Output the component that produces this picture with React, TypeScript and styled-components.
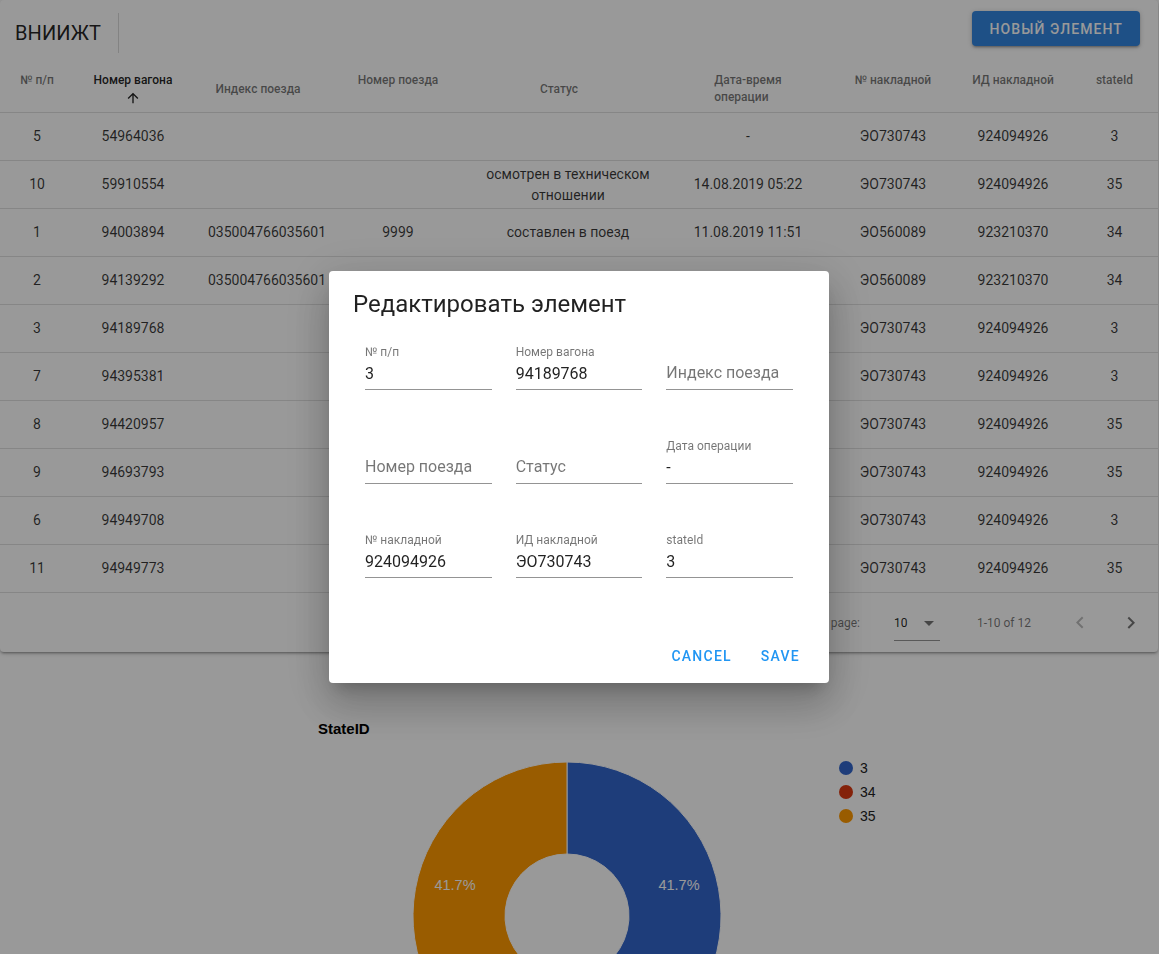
import React from "react";
import styled, { createGlobalStyle } from "styled-components";

const Global = createGlobalStyle`
  html, body {
    margin: 0;
    padding: 0;
    overflow: hidden;
    background: #fff;
    font-family: Roboto, "Liberation Sans", Arial, sans-serif;
  }
  * { box-sizing: border-box; }
`;

const Page = styled.div`
  width: 1159px;
  height: 954px;
  overflow: hidden;
  background: #fff;
`;

const Paper = styled.div`
  width: 1158px;
  background: #fff;
  border-radius: 4px;
  box-shadow: 0px 1px 5px 0px rgba(0,0,0,0.2), 0px 2px 2px 0px rgba(0,0,0,0.14), 0px 3px 1px -2px rgba(0,0,0,0.12);
`;

const Toolbar = styled.div`
  display: flex;
  align-items: center;
  height: 66px;
  padding: 0 18px 0 15px;
`;

const Brand = styled.div`
  font-size: 20px;
  font-weight: 400;
  color: rgba(0,0,0,0.87);
  letter-spacing: 0.1px;
`;

const VDivider = styled.div`
  width: 1px;
  height: 40px;
  margin-left: 17px;
  background: rgba(0,0,0,0.14);
`;

const Spacer = styled.div`
  flex: 1;
`;

const PrimaryButton = styled.button`
  align-self: flex-start;
  margin-top: 11px;
  height: 35px;
  padding: 0 17px;
  border: none;
  border-radius: 4px;
  background: #3385e0;
  color: #fff;
  font-family: Roboto, sans-serif;
  font-size: 14px;
  font-weight: 500;
  letter-spacing: 1.1px;
  text-transform: uppercase;
  box-shadow: 0px 1px 5px 0px rgba(0,0,0,0.2), 0px 2px 2px 0px rgba(0,0,0,0.14), 0px 3px 1px -2px rgba(0,0,0,0.12);
`;

const COLS = "74px 118px 150px 112px 228px 132px 158px 82px 1fr";

const HeadRow = styled.div`
  display: grid;
  grid-template-columns: ${COLS};
  height: 47px;
  border-bottom: 1px solid rgba(224,224,224,1);
`;

const BodyRow = styled.div`
  display: grid;
  grid-template-columns: ${COLS};
  height: 48px;
  border-bottom: 1px solid rgba(224,224,224,1);
`;

const HeadCell = styled.div<{ $pl?: number }>`
  display: flex;
  align-items: center;
  justify-content: center;
  padding-left: ${(p) => p.$pl || 0}px;
  font-size: 12px;
  font-weight: 500;
  line-height: 17px;
  color: rgba(0,0,0,0.54);
`;

const SortLabel = styled.span<{ $stacked?: boolean; $active?: boolean }>`
  display: inline-flex;
  flex-direction: ${(p) => (p.$stacked ? "column" : "row")};
  align-items: center;
  color: ${(p) => (p.$active ? "rgba(0,0,0,0.87)" : "rgba(0,0,0,0.54)")};
`;

const TwoLine = styled.span`
  text-align: left;
  white-space: nowrap;
`;

const ArrowBox = styled.span<{ $hidden?: boolean; $stacked?: boolean }>`
  display: inline-flex;
  width: 16px;
  height: ${(p) => (p.$stacked ? 18 : 16)}px;
  margin-left: ${(p) => (p.$stacked ? 0 : 2)}px;
  align-items: center;
  justify-content: center;
  opacity: ${(p) => (p.$hidden ? 0 : 1)};
  svg { width: 16px; height: 16px; fill: rgba(0,0,0,0.87); }
`;

const Cell = styled.div<{ $pl?: number }>`
  display: flex;
  align-items: center;
  justify-content: center;
  text-align: center;
  padding-left: ${(p) => p.$pl || 0}px;
  font-size: 14px;
  line-height: 21px;
  color: rgba(0,0,0,0.78);
`;

const Wrap = styled.span`
  max-width: 172px;
`;

const Pagination = styled.div`
  display: flex;
  align-items: center;
  justify-content: flex-end;
  height: 59px;
  padding-right: 3px;
  padding-top: 1px;
  font-size: 12px;
  color: rgba(0,0,0,0.54);
`;

const Caption = styled.span<{ $ml?: number }>`
  margin-left: ${(p) => p.$ml || 0}px;
  font-size: 12px;
  color: rgba(0,0,0,0.54);
`;

const SelectBox = styled.div`
  position: relative;
  display: flex;
  align-items: center;
  justify-content: space-between;
  width: 46px;
  height: 20px;
  margin-left: 34px;
  font-size: 12px;
  color: rgba(0,0,0,0.87);
  svg { width: 24px; height: 24px; fill: rgba(0,0,0,0.54); margin-right: -1px; }
  &::after {
    content: "";
    position: absolute;
    left: 0;
    right: 0;
    bottom: -8px;
    height: 1px;
    background: rgba(0,0,0,0.42);
  }
`;

const PagerActions = styled.div`
  display: flex;
  gap: 3px;
  margin-left: 25px;
`;

const IconBtn = styled.span<{ $disabled?: boolean }>`
  display: flex;
  width: 48px;
  height: 48px;
  align-items: center;
  justify-content: center;
  svg { width: 24px; height: 24px; fill: ${(p) => (p.$disabled ? "rgba(0,0,0,0.26)" : "rgba(0,0,0,0.54)")}; }
`;

const ChartSection = styled.div`
  height: 302px;
  overflow: hidden;
`;

const Backdrop = styled.div`
  position: fixed;
  inset: 0;
  padding-right: 1px;
  background: rgba(0,0,0,0.4);
  display: flex;
  align-items: center;
  justify-content: center;
`;

const Dialog = styled.div`
  width: 500px;
  background: #fff;
  border-radius: 4px;
  box-shadow: 0px 11px 15px -7px rgba(0,0,0,0.2), 0px 24px 38px 3px rgba(0,0,0,0.14), 0px 9px 46px 8px rgba(0,0,0,0.12);
  display: flex;
  flex-direction: column;
`;

const DialogTitle = styled.h2`
  margin: 0;
  padding: 19px 24px 0 24px;
  font-size: 24px;
  line-height: 28px;
  font-weight: 400;
  color: rgba(0,0,0,0.87);
`;

const FieldGrid = styled.div`
  display: grid;
  grid-template-columns: repeat(3, 1fr);
  column-gap: 24px;
  row-gap: 46px;
  padding: 24px 36px 0 36px;
`;

const Field = styled.div`
  height: 48px;
  border-bottom: 1px solid rgba(0,0,0,0.42);
  display: flex;
  flex-direction: column;
`;

const FieldLabel = styled.div`
  height: 16px;
  padding-top: 3px;
  font-size: 12px;
  line-height: 14px;
  color: rgba(0,0,0,0.54);
  white-space: nowrap;
`;

const FieldInput = styled.div<{ $placeholder?: boolean }>`
  padding: 6px 0 7px;
  font-size: 16px;
  line-height: 19px;
  color: ${(p) => (p.$placeholder ? "rgba(0,0,0,0.54)" : "rgba(0,0,0,0.87)")};
  white-space: nowrap;
`;

const DialogActions = styled.div`
  display: flex;
  justify-content: flex-end;
  gap: 13px;
  padding: 60px 21px 9px;
`;

const TextButton = styled.button`
  height: 36px;
  padding: 0 8px;
  border: none;
  background: transparent;
  color: #2196f3;
  font-family: Roboto, sans-serif;
  font-size: 14px;
  font-weight: 500;
  letter-spacing: 1.25px;
  text-transform: uppercase;
`;

type Col = { pl?: number };
const colPad: Col[] = [{}, {}, {}, {}, {}, {}, {}, {}, { pl: 17 }];

const ArrowUp = () => (
  <svg viewBox="0 0 24 24"><path d="M4 12l1.41 1.41L11 7.83V20h2V7.83l5.58 5.59L20 12l-8-8-8 8z" /></svg>
);

type Head = { label: React.ReactNode; stacked?: boolean; active?: boolean; arrow?: boolean };
const heads: Head[] = [
  { label: "№ п/п", stacked: true, arrow: true },
  { label: "Номер вагона", stacked: true, active: true, arrow: true },
  { label: "Индекс поезда", arrow: true },
  { label: "Номер поезда", stacked: true, arrow: true },
  { label: "Статус", arrow: true },
  { label: <TwoLine>Дата-время<br />операции</TwoLine> },
  { label: "№ накладной", stacked: true, arrow: true },
  { label: "ИД накладной", stacked: true, arrow: true },
  { label: "stateId", stacked: true, arrow: true },
];

const rows: string[][] = [
  ["5", "54964036", "", "", "", "-", "ЭО730743", "924094926", "3"],
  ["10", "59910554", "", "", "осмотрен в техническом отношении", "14.08.2019 05:22", "ЭО730743", "924094926", "35"],
  ["1", "94003894", "035004766035601", "9999", "составлен в поезд", "11.08.2019 11:51", "ЭО560089", "923210370", "34"],
  ["2", "94139292", "035004766035601", "", "", "", "ЭО560089", "923210370", "34"],
  ["3", "94189768", "", "", "", "", "ЭО730743", "924094926", "3"],
  ["7", "94395381", "", "", "", "", "ЭО730743", "924094926", "3"],
  ["8", "94420957", "", "", "", "", "ЭО730743", "924094926", "35"],
  ["9", "94693793", "", "", "", "", "ЭО730743", "924094926", "35"],
  ["6", "94949708", "", "", "", "", "ЭО730743", "924094926", "3"],
  ["11", "94949773", "", "", "", "", "ЭО730743", "924094926", "35"],
];

type F = { label: string; value?: string };
const fields: F[] = [
  { label: "№ п/п", value: "3" },
  { label: "Номер вагона", value: "94189768" },
  { label: "Индекс поезда" },
  { label: "Номер поезда" },
  { label: "Статус" },
  { label: "Дата операции", value: "-" },
  { label: "№ накладной", value: "924094926" },
  { label: "ИД накладной", value: "ЭО730743" },
  { label: "stateId", value: "3" },
];

const CX = 567;
const CY = 264;
const RO = 154;
const RI = 62;
const pt = (r: number, a: number) => {
  const rad = (a * Math.PI) / 180;
  return `${(CX + r * Math.sin(rad)).toFixed(2)} ${(CY - r * Math.cos(rad)).toFixed(2)}`;
};
const slice = (a0: number, a1: number) => {
  const large = a1 - a0 > 180 ? 1 : 0;
  return `M ${pt(RO, a0)} A ${RO} ${RO} 0 ${large} 1 ${pt(RO, a1)} L ${pt(RI, a1)} A ${RI} ${RI} 0 ${large} 0 ${pt(RI, a0)} Z`;
};

const Chart = () => (
  <svg width="1159" height="302" viewBox="0 0 1159 302">
    <text x="318" y="82" fontFamily="'Liberation Sans', Arial, sans-serif" fontWeight="bold" fontSize="15" fill="#000">StateID</text>
    <path d={slice(0, 150.12)} fill="#3366cc" stroke="#fff" strokeWidth="1" />
    <path d={slice(150.12, 209.88)} fill="#dc3912" stroke="#fff" strokeWidth="1" />
    <path d={slice(209.88, 360)} fill="#ff9900" stroke="#fff" strokeWidth="1" />
    <text x="679" y="238" textAnchor="middle" fontFamily="'Liberation Sans', Arial, sans-serif" fontSize="14.5" fill="#fff">41.7%</text>
    <text x="455" y="238" textAnchor="middle" fontFamily="'Liberation Sans', Arial, sans-serif" fontSize="14.5" fill="#fff">41.7%</text>
    {[
      { c: "#3366cc", t: "3" },
      { c: "#dc3912", t: "34" },
      { c: "#ff9900", t: "35" },
    ].map((l, i) => (
      <g key={l.t}>
        <circle cx="846" cy={116 + i * 24} r="7" fill={l.c} />
        <text x="860" y={121 + i * 24} fontFamily="'Liberation Sans', Arial, sans-serif" fontSize="14" fill="#222">{l.t}</text>
      </g>
    ))}
  </svg>
);

export default function App() {
  return (
    <>
      <Global />
      <Page>
        <Paper>
          <Toolbar>
            <Brand>ВНИИЖТ</Brand>
            <VDivider />
            <Spacer />
            <PrimaryButton>Новый элемент</PrimaryButton>
          </Toolbar>
          <HeadRow>
            {heads.map((h, i) => (
              <HeadCell key={i} $pl={colPad[i].pl}>
                <SortLabel $stacked={h.stacked} $active={h.active}>
                  <span>{h.label}</span>
                  {h.arrow && (
                    <ArrowBox $hidden={!h.active} $stacked={h.stacked}>
                      <ArrowUp />
                    </ArrowBox>
                  )}
                </SortLabel>
              </HeadCell>
            ))}
          </HeadRow>
          {rows.map((r, ri) => (
            <BodyRow key={ri}>
              {r.map((v, ci) => (
                <Cell key={ci} $pl={colPad[ci].pl}>
                  {ci === 4 ? <Wrap>{v}</Wrap> : v}
                </Cell>
              ))}
            </BodyRow>
          ))}
          <Pagination>
            <Caption>Rows per page:</Caption>
            <SelectBox>
              <span>10</span>
              <svg viewBox="0 0 24 24"><path d="M7 10l5 5 5-5z" /></svg>
            </SelectBox>
            <Caption $ml={37}>1-10 of 12</Caption>
            <PagerActions>
              <IconBtn $disabled>
                <svg viewBox="0 0 24 24"><path d="M15.41 16.09l-4.58-4.59 4.58-4.59L14 5.5l-6 6 6 6z" /></svg>
              </IconBtn>
              <IconBtn>
                <svg viewBox="0 0 24 24"><path d="M8.59 16.34l4.58-4.59-4.58-4.59L10 5.75l6 6-6 6z" /></svg>
              </IconBtn>
            </PagerActions>
          </Pagination>
        </Paper>
        <ChartSection>
          <Chart />
        </ChartSection>
      </Page>
      <Backdrop>
        <Dialog>
          <DialogTitle>Редактировать элемент</DialogTitle>
          <FieldGrid>
            {fields.map((f) => (
              <Field key={f.label}>
                <FieldLabel>{f.value ? f.label : ""}</FieldLabel>
                <FieldInput $placeholder={!f.value}>{f.value || f.label}</FieldInput>
              </Field>
            ))}
          </FieldGrid>
          <DialogActions>
            <TextButton>Cancel</TextButton>
            <TextButton>Save</TextButton>
          </DialogActions>
        </Dialog>
      </Backdrop>
    </>
  );
}
